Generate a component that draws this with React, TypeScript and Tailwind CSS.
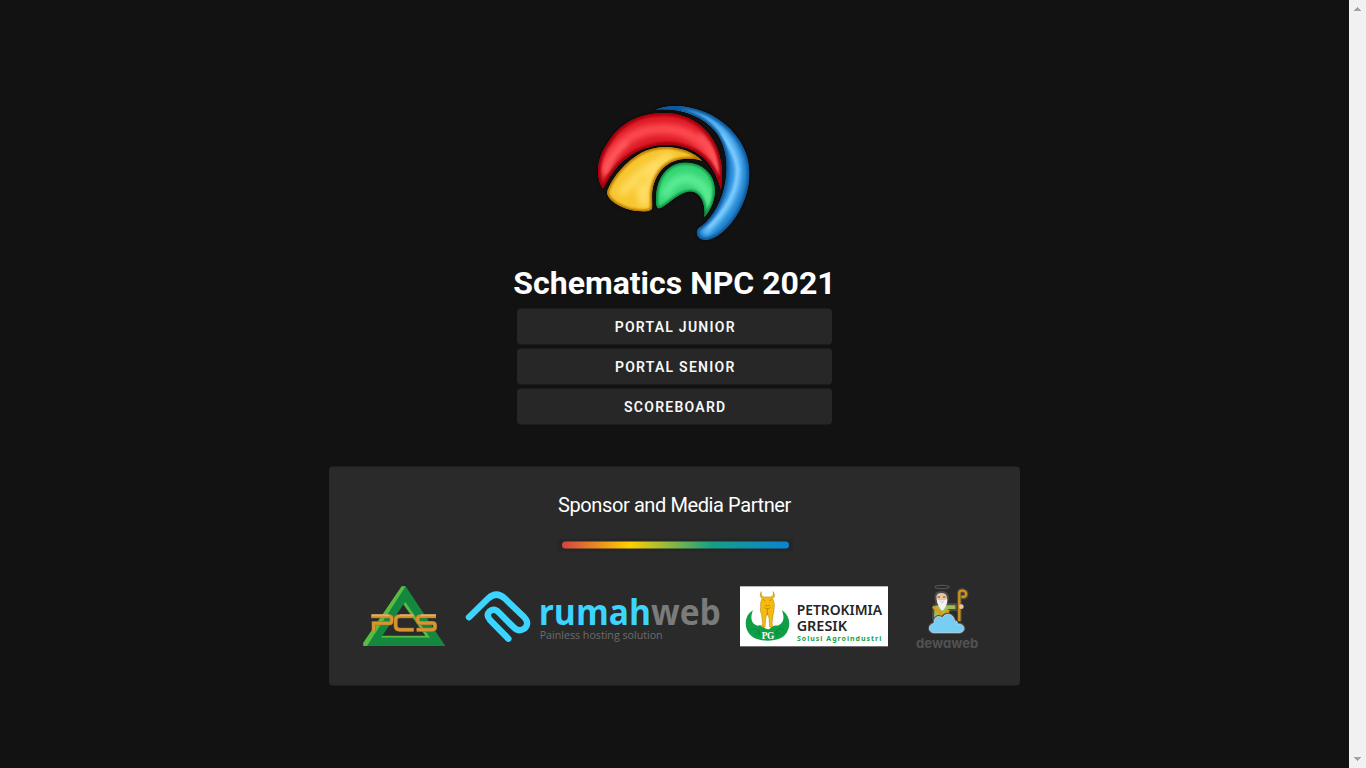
import React from "react";

function BrandLogo() {
  const red = "M42 238 C40 205 52 172 78 136 C110 88 165 58 235 57 C310 55 372 95 399 160 C414 200 419 245 411 289 C405 262 388 217 358 191 C322 160 270 147 222 154 C155 165 112 197 78 248 C71 260 65 271 57 284 C47 274 43 256 42 238 Z";
  const yellow = "M71 287 C88 245 127 202 170 177 C215 153 266 155 308 170 C326 177 342 187 355 201 C330 192 300 193 274 200 C235 212 211 248 205 290 C203 313 206 330 204 345 C193 356 165 353 143 349 C113 342 82 326 72 306 C68 299 69 293 71 287 Z";
  const green = "M216 327 C214 285 224 245 256 221 C282 202 316 202 343 213 C375 227 393 257 393 288 C393 318 381 347 361 370 C363 343 360 315 340 300 C325 289 309 292 293 300 C267 313 249 333 228 343 C220 345 217 338 216 327 Z";
  const blue = "M214 48 C242 34 284 33 326 43 C383 56 436 91 468 142 C495 184 501 233 493 275 C483 329 454 381 416 414 C394 433 369 442 353 436 C336 429 335 411 344 402 C377 382 404 339 418 291 C437 219 427 154 394 112 C353 62 286 41 214 48 Z";
  return (
    <svg className="mr-[1px] h-[155px] w-[180px] shrink-0" viewBox="0 0 540 465" aria-label="Schematics">
      <defs>
        <clipPath id="cRed"><path d={red} /></clipPath>
        <clipPath id="cYellow"><path d={yellow} /></clipPath>
        <clipPath id="cGreen"><path d={green} /></clipPath>
        <clipPath id="cBlue"><path d={blue} /></clipPath>
        <filter id="b3" x="-20%" y="-20%" width="140%" height="140%"><feGaussianBlur stdDeviation="3" /></filter>
        <filter id="b7" x="-30%" y="-30%" width="160%" height="160%"><feGaussianBlur stdDeviation="7" /></filter>
        <filter id="b12" x="-60%" y="-40%" width="220%" height="180%"><feGaussianBlur stdDeviation="11" /></filter>
      </defs>
      <g fill="#000" stroke="#000" strokeWidth="5" filter="url(#b3)" opacity=".4">
        <path d={blue} /><path d={red} /><path d={yellow} /><path d={green} />
      </g>
      <g clipPath="url(#cBlue)">
        <path d={blue} fill="#2585cf" />
        <path d="M285 48 C360 65 435 110 459 200 C474 275 435 352 360 418" fill="none" stroke="#64bdfa" strokeWidth="24" filter="url(#b7)" />
        <path d="M410 120 C440 155 456 190 461 225 C460 290 425 355 372 402" fill="none" stroke="#86d0ff" strokeWidth="7" filter="url(#b3)" />
        <path d={blue} fill="none" stroke="#0a589c" strokeWidth="14" filter="url(#b3)" />
      </g>
      <g clipPath="url(#cRed)">
        <path d={red} fill="#dc1824" />
        <path d="M58 240 C75 165 150 104 225 105 C320 98 388 160 402 240" fill="none" stroke="#ff4d52" strokeWidth="32" filter="url(#b12)" />
        <path d="M64 242 C75 200 100 170 130 145 M345 120 C385 160 402 200 408 260" fill="none" stroke="#ff6d71" strokeWidth="7" filter="url(#b7)" />
        <path d={red} fill="none" stroke="#a60010" strokeWidth="17" filter="url(#b3)" />
      </g>
      <g clipPath="url(#cYellow)">
        <path d={yellow} fill="#f7c62f" />
        <path d="M110 300 C150 250 200 210 265 185 M185 335 C178 300 195 250 225 215 M165 270 L180 335" fill="none" stroke="#ffdf68" strokeWidth="23" filter="url(#b12)" />
        <path d={yellow} fill="none" stroke="#b87800" strokeWidth="12" filter="url(#b3)" />
      </g>
      <g clipPath="url(#cGreen)">
        <path d={green} fill="#35d472" />
        <path d="M240 310 C255 265 300 238 335 262 C365 275 373 300 374 335" fill="none" stroke="#63f09a" strokeWidth="25" filter="url(#b12)" />
        <path d={green} fill="none" stroke="#0b9142" strokeWidth="12" filter="url(#b3)" />
      </g>
    </svg>
  );
}

function PcsLogo() {
  const letters = (
    <>
      <path d="M49 124 H102 Q110 124 110 131 V137 Q110 145 102 145 H56 V170" />
      <path d="M176 124 H134 Q122 124 122 135 V153 Q122 164 134 164 H176" />
      <path d="M243 124 H197 Q188 124 188 131 V136 Q188 144 197 144 H232 Q240 144 240 151 V157 Q240 164 232 164 H185" />
    </>
  );
  return (
    <svg className="h-[80px] w-[100px] shrink-0" viewBox="0 0 300 240" aria-label="PCS">
      <path fillRule="evenodd" d="M140 34 H152 L271 213 H25 V203 Z M148 84 L78 188 H221 Z" fill="#14883f" />
      <path d="M140 34 H152 L36 213 H25 V203 Z M145 88 L151 81 L225 188 H78 L82 182 H211 Z" fill="#5abb43" />
      <g fill="none" stroke="#98733a" strokeWidth="12">{letters}</g>
      <g fill="none" stroke="#d9952d" strokeWidth="9">{letters}</g>
      <path d="M50 120 H103 M134 120 H176 M197 120 H243" stroke="#edc58c" strokeWidth="3" />
    </svg>
  );
}

function RumahwebLogo() {
  return (
    <svg className="h-[70px] w-[270px] shrink-0" viewBox="0 0 810 210" aria-label="rumahweb">
      <path d="M27 112 L85 55 Q109 33 134 55 L193 112 Q210 130 193 146 Q176 157 161 142 L116 97 Q103 83 89 94 Q77 105 90 120 L145 176" fill="none" stroke="#3bd5ff" strokeWidth="19" strokeLinecap="round" strokeLinejoin="round" />
      <g fontFamily="'Open Sans', 'Noto Sans', sans-serif">
        <text x="236" y="135" fontSize="106" fontWeight="700" fill="#3bd5ff" textLength="546" lengthAdjust="spacingAndGlyphs">rumah<tspan fill="#7b7b7b">web</tspan></text>
        <text x="239" y="176" fontSize="33" fill="#6c6c6c" textLength="369" lengthAdjust="spacingAndGlyphs">Painless hosting solution</text>
      </g>
    </svg>
  );
}

function PetrokimiaLogo() {
  return (
    <svg className="h-[72px] w-[160px] shrink-0" viewBox="0 0 480 216" aria-label="Petrokimia Gresik">
      <rect x="15" y="19" width="444" height="180" fill="#fff" />
      <path d="M54 91 C27 106 26 145 46 165 C65 187 130 188 149 166 C170 143 167 108 141 91 C150 115 145 132 127 137 C112 133 108 147 98 148 C86 146 82 132 69 137 C48 132 45 113 54 91 Z" fill="#0f9f46" />
      <path d="M49 151 Q61 139 69 153 Q70 163 60 161 M147 151 Q134 139 126 153 Q125 163 136 161 M70 170 Q77 158 71 149 M126 170 Q119 158 125 149" stroke="#0b8039" strokeWidth="2" fill="none" />
      <path d="M79 35 Q76 49 88 51 H106 Q119 48 114 35 Q124 48 113 56 Q121 70 117 88 Q117 96 114 105 L111 132 L115 141 H104 L102 113 L97 99 L92 114 L90 141 H79 L83 131 L80 104 Q74 94 77 82 Q75 67 81 56 Q71 48 79 35 Z" fill="#f6bb0c" stroke="#a67c0c" strokeWidth="1.5" />
      <path d="M84 58 L91 63 M110 58 L103 63 M90 75 Q97 81 105 75 M88 82 Q97 92 107 82 M97 84 V106" stroke="#c58b08" strokeWidth="3" fill="none" />
      <text x="80" y="178" fontFamily="'Liberation Serif', serif" fontWeight="700" fontSize="28" fill="#fff" textLength="38">PG</text>
      <g fontFamily="'Noto Sans', sans-serif" fontWeight="600" fill="#242526">
        <text x="185" y="105" fontSize="43" textLength="256" lengthAdjust="spacingAndGlyphs">PETROKIMIA</text>
        <text x="185" y="153" fontSize="43" textLength="151" lengthAdjust="spacingAndGlyphs">GRESIK</text>
      </g>
      <text x="186" y="183" fontFamily="'Noto Sans', sans-serif" fontWeight="700" fontSize="21" fill="#11a24b" textLength="253">Solusi Agroindustri</text>
    </svg>
  );
}

function DewawebLogo() {
  return (
    <svg className="h-[80px] w-[85px] shrink-0" viewBox="0 0 255 240" aria-label="dewaweb">
      <ellipse cx="111" cy="27" rx="21" ry="5" fill="none" stroke="#505050" strokeWidth="4" />
      <g stroke="#4b4c4d" strokeWidth="6" strokeLinejoin="round">
        <path d="M91 58 Q91 42 109 42 Q128 42 129 60 L125 87 H96 Z" fill="#edc3a0" />
        <path d="M86 83 L98 79 H154 V96 H130 L132 122 H84 Z" fill="#a2bd4b" />
      </g>
      <path d="M163 130 V44 Q164 37 174 38 Q186 41 183 52 Q179 60 169 55" fill="none" stroke="#4b4c4d" strokeWidth="14" />
      <path d="M163 130 V44 Q164 37 174 38 Q186 41 183 52 Q179 60 169 55" fill="none" stroke="#d39310" strokeWidth="7" />
      <path d="M84 86 L121 118 L130 95" fill="none" stroke="#df9a13" strokeWidth="9" />
      <path d="M95 63 Q103 70 109 66 Q118 70 127 62 Q127 86 112 98 Q99 90 95 63 Z" fill="#f2f2f2" />
      <path d="M98 57 H105 M114 57 H121" stroke="#58443a" strokeWidth="3" />
      <path d="M106 71 Q111 75 116 71" stroke="#aaa" strokeWidth="2" fill="none" />
      <circle cx="169" cy="86" r="7" fill="#edc3a0" />
      <path d="M86 164 C69 163 68 139 88 136 C84 119 99 110 112 119 C123 101 147 108 149 130 C155 128 158 131 157 138 C180 136 184 161 164 164 Z" fill="#78cdf3" stroke="#4b4c4d" strokeWidth="8" />
      <path d="M86 164 C69 163 68 139 88 136 C84 119 99 110 112 119 C123 101 147 108 149 130 C155 128 158 131 157 138 C180 136 184 161 164 164 Z" fill="#78cdf3" stroke="#c9e9f5" strokeWidth="2" />
      <text x="33" y="210" className="[font-feature-settings:'cv11'_1]" fontFamily="Inter, sans-serif" fontWeight="700" fontSize="40" fill="#505153" textLength="187" lengthAdjust="spacingAndGlyphs">dewaweb</text>
    </svg>
  );
}

const links = ["PORTAL JUNIOR", "PORTAL SENIOR", "SCOREBOARD"];

export default function App() {
  return (
    <div className="flex h-[768px] w-full overflow-hidden bg-[#121212] font-['Roboto',sans-serif] text-white">
      <main className="flex min-w-0 flex-1 flex-col items-center pt-[94px]">
        <BrandLogo />
        <h1 className="mt-[10px] h-[50px] text-[32px] leading-[48px] font-bold whitespace-nowrap">Schematics NPC 2021</h1>
        <div className="flex translate-y-[-0.5px] flex-col items-center">
          <nav className="flex w-[315px] flex-col gap-1">
            {links.map((label) => (
              <button key={label} className="h-9 rounded bg-[#272727] pl-[1.5px] text-center text-sm font-semibold tracking-[1.25px] text-[#f8f8f8]">
                {label}
              </button>
            ))}
          </nav>
          <section className="mt-[42px] flex h-[219px] w-[691px] flex-col items-center rounded bg-[#2a2a2a]">
            <h2 className="mt-[22px] h-8 text-[20px] leading-8 tracking-[-0.4px] whitespace-nowrap">Sponsor and Media Partner</h2>
            <div className="mt-[18px] ml-[1px] flex h-[13px] w-[235px] items-center justify-center bg-[#262626]">
              <div className="h-[7px] w-[227px] rounded-full bg-[linear-gradient(90deg,#d24343_0%,#ffd000_30%,#14a085_66%,#0984d4_100%)]" />
            </div>
            <div className="mt-[23px] flex w-full translate-y-[0.5px] items-start pl-[26px]">
              <PcsLogo />
              <div className="ml-[5px] pt-[5px]"><RumahwebLogo /></div>
              <div className="ml-[5px] pt-[5px]"><PetrokimiaLogo /></div>
              <div className="ml-[10px] pt-[3px]"><DewawebLogo /></div>
            </div>
          </section>
        </div>
      </main>
      <aside className="flex w-[17px] shrink-0 flex-col items-center justify-between bg-[#f1f1f1] py-[7px]">
        <svg className="h-1 w-[7px]" viewBox="0 0 7 4" shapeRendering="crispEdges"><path d="M3 0h1v1h1v1h1v1h1v1H0V3h1V2h1V1h1z" fill="#a3a3a3" /></svg>
        <svg className="h-1 w-[7px]" viewBox="0 0 7 4" shapeRendering="crispEdges"><path d="M0 0h7v1H6v1H5v1H4v1H3V3H2V2H1V1H0z" fill="#a3a3a3" /></svg>
      </aside>
    </div>
  );
}
